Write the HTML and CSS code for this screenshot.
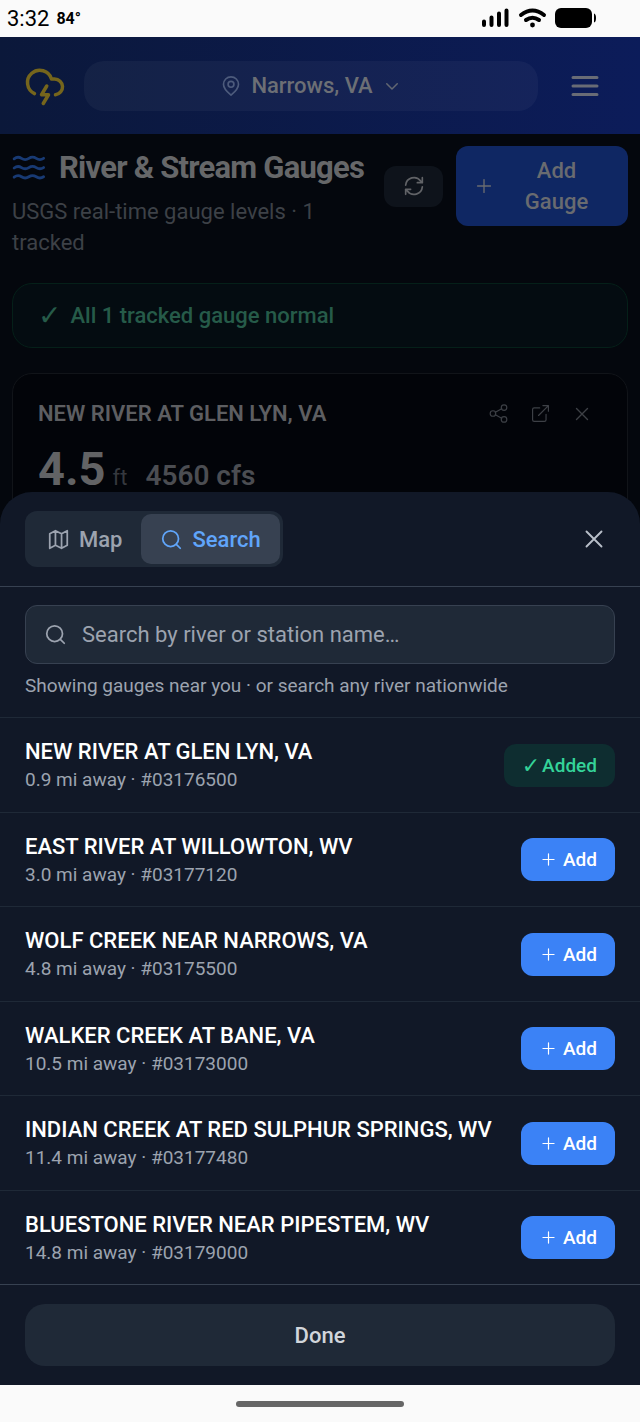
FILE: index.html
```html
<!DOCTYPE html>
<html lang="en">
<head>
  <meta charset="UTF-8" />
  <meta name="viewport" content="width=device-width, initial-scale=1.0"/>
  <title>River &amp; Stream Gauges</title>
  <link rel="stylesheet" href="styles.css">
</head>
<body>

  <!-- icons used more than once -->
  <svg class="sprite" aria-hidden="true">
    <symbol id="plus" viewBox="0 0 24 24"><path d="M5 12h14M12 5v14"/></symbol>
    <symbol id="search" viewBox="0 0 24 24"><circle cx="11" cy="11" r="9"/><path d="m22 22-4.500-4.500"/></symbol>
    <symbol id="close" viewBox="0 0 24 24"><path d="M18 6 6 18M6 6l12 12"/></symbol>
  </svg>

  <div class="status-bar">
    <span class="time">3:32</span>
    <span class="temp">84°</span>
    <svg class="status-icons" width="114" height="22" viewBox="0 0 114 22">
      <path class="bars" d="M3 13.500v3.500M10.500 9.500v7.500M18 5.500v11.500M25.500 2.500v14.500"/>
      <path class="waves" d="M40 7q11.500-9 23 0M45 12q6.500-4.500 13 0"/>
      <circle cx="51.500" cy="17" r="2.400"/>
      <rect x="74" y="0" width="37" height="20" rx="6"/>
      <path d="M113 5.500q2 .5 2 4.500t-2 4.500z"/>
    </svg>
  </div>

  <div class="screen">
    <header class="app-header">
      <svg class="logo" width="42" height="42" viewBox="0 0 24 24"><path d="M6 16.326A7 7 0 1 1 15.710 8h1.790a4.500 4.500 0 0 1 .5 8.973"/><path d="m13 12-3 5h4l-3 5"/></svg>
      <button class="location" type="button">
        <svg class="pin" width="20" height="20" viewBox="0 0 24 24"><path d="M21 10c0 6-6 10.500-9 13-3-2.500-9-7-9-13a9 9 0 0 1 18 0z"/><circle cx="12" cy="10" r="3.500"/></svg>
        <span>Narrows, VA</span>
        <svg class="chevron" width="18" height="18" viewBox="0 0 24 24"><path d="m5 9 7 7 7-7"/></svg>
      </button>
      <button class="menu" type="button" aria-label="Menu">
        <svg width="30" height="30" viewBox="0 0 30 30"><path d="M3 6.500h24M3 15h24M3 23.500h24"/></svg>
      </button>
    </header>

    <main class="page">
      <div class="page-head">
        <div class="page-title">
          <h1>
            <svg width="34" height="34" viewBox="0 0 24 24"><path d="M1.500 5.500q2.600-2 5.200-.3t5.200 0 5.200 0 5.200 0M1.500 12q2.600-2 5.200-.3t5.200 0 5.200 0 5.200 0M1.500 18.500q2.600-2 5.200-.3t5.200 0 5.200 0 5.200 0"/></svg>
            River &amp; Stream Gauges
          </h1>
          <p>USGS real-time gauge levels · 1 tracked</p>
        </div>
        <div class="page-actions">
          <button class="refresh" type="button" aria-label="Refresh">
            <svg width="20" height="20" viewBox="0 0 24 24"><path d="M2 11A10 10 0 0 1 20 6l2 2M22 2v6h-6M22 13A10 10 0 0 1 4 18l-2-2M2 22v-6h6"/></svg>
          </button>
          <button class="add-gauge" type="button">
            <svg width="22" height="22"><use href="#plus"/></svg>
            <span>Add Gauge</span>
          </button>
        </div>
      </div>

      <div class="alert"><span class="tick">✓</span>All 1 tracked gauge normal</div>

      <section class="gauge-card">
        <div class="card-head">
          <h2>NEW RIVER AT GLEN LYN, VA</h2>
          <div class="card-actions">
            <button type="button" aria-label="Share">
              <svg width="19" height="19" viewBox="0 0 24 24"><circle cx="19" cy="4.500" r="3.500"/><circle cx="5" cy="12" r="3.500"/><circle cx="19" cy="19.500" r="3.500"/><path d="m8 10.400 8-4.300M8 13.600l8 4.300"/></svg>
            </button>
            <button type="button" aria-label="Open">
              <svg width="19" height="19" viewBox="0 0 24 24"><path d="M19 13v7a2 2 0 0 1-2 2H4a2 2 0 0 1-2-2V7a2 2 0 0 1 2-2h7M15 2h7v7M9.500 14.500 22 2"/></svg>
            </button>
            <button type="button" aria-label="Remove">
              <svg width="22" height="22"><use href="#close"/></svg>
            </button>
          </div>
        </div>
        <div class="reading">
          <span class="level">4.5</span>
          <span class="unit">ft</span>
          <span class="flow">4560 cfs</span>
        </div>
      </section>
    </main>

    <div class="sheet" role="dialog" aria-label="Add gauge">
      <div class="sheet-head">
        <div class="tabs">
          <button class="tab" type="button">
            <svg width="21" height="21" viewBox="0 0 24 24"><path d="M2 5.500 8.500 2l7 3.500L22 2v16.500L15.500 22l-7-3.500L2 22zM8.500 2v16.500M15.500 5.500V22"/></svg>
            Map
          </button>
          <button class="tab active" type="button">
            <svg width="21" height="21"><use href="#search"/></svg>
            Search
          </button>
        </div>
        <button class="close" type="button" aria-label="Close">
          <svg width="30" height="30"><use href="#close"/></svg>
        </button>
      </div>

      <div class="search-area">
        <div class="search-box">
          <svg width="21" height="21"><use href="#search"/></svg>
          <input type="text" id="gaugeSearch" aria-label="Search gauges" placeholder="Search by river or station name…" />
        </div>
        <label class="hint" for="gaugeSearch">Showing gauges near you · or search any river nationwide</label>
      </div>

      <ul class="results">
        <li>
          <div class="station"><h3>NEW RIVER AT GLEN LYN, VA</h3><p>0.9 mi away · #03176500</p></div>
          <button class="added" type="button" disabled><span class="tick">✓</span>Added</button>
        </li>
        <li>
          <div class="station"><h3>EAST RIVER AT WILLOWTON, WV</h3><p>3.0 mi away · #03177120</p></div>
          <button class="add" type="button"><svg width="19" height="19"><use href="#plus"/></svg>Add</button>
        </li>
        <li>
          <div class="station"><h3>WOLF CREEK NEAR NARROWS, VA</h3><p>4.8 mi away · #03175500</p></div>
          <button class="add" type="button"><svg width="19" height="19"><use href="#plus"/></svg>Add</button>
        </li>
        <li>
          <div class="station"><h3>WALKER CREEK AT BANE, VA</h3><p>10.5 mi away · #03173000</p></div>
          <button class="add" type="button"><svg width="19" height="19"><use href="#plus"/></svg>Add</button>
        </li>
        <li>
          <div class="station"><h3>INDIAN CREEK AT RED SULPHUR SPRINGS, WV</h3><p>11.4 mi away · #03177480</p></div>
          <button class="add" type="button"><svg width="19" height="19"><use href="#plus"/></svg>Add</button>
        </li>
        <li>
          <div class="station"><h3>BLUESTONE RIVER NEAR PIPESTEM, WV</h3><p>14.8 mi away · #03179000</p></div>
          <button class="add" type="button"><svg width="19" height="19"><use href="#plus"/></svg>Add</button>
        </li>
      </ul>

      <div class="sheet-foot">
        <button class="done" type="button">Done</button>
      </div>
    </div>
  </div>

  <div class="nav-bar"><div class="handle"></div></div>

</body>
</html>
```
FILE: styles.css
```css
* {
  box-sizing: border-box;
  margin: 0;
  padding: 0;
}
body {
  min-height: 100vh;
  display: flex;
  flex-direction: column;
  background: #fafafa;
  font-family: Roboto, sans-serif;
  font-size: 22px;
  line-height: 31px;
}
button {
  display: flex;
  align-items: center;
  justify-content: center;
  border: none;
  background: none;
  color: inherit;
  font: inherit;
  font-weight: 500;
  cursor: pointer;
}
svg {
  flex: none;
  fill: none;
  stroke: currentColor;
  stroke-width: 2;
  stroke-linecap: round;
  stroke-linejoin: round;
}
.sprite {
  position: absolute;
  width: 0;
  height: 0;
}
.tick {
  font-family: "DejaVu Sans", sans-serif;
  font-style: italic;
}

/* phone status bar */
.status-bar {
  display: flex;
  align-items: center;
  gap: 7px;
  height: 37px;
  padding: 0 45px 0 7px;
  color: #000;
}
.time {
  font-size: 22px;
}
.temp {
  font-size: 16px;
  font-weight: 700;
}
.status-icons {
  margin-left: auto;
  fill: #000;
  stroke: none;
  overflow: visible;
}
.bars, .waves {
  fill: none;
  stroke: #000;
  stroke-width: 4;
}

.screen {
  position: relative;
  flex: 1;
  overflow: hidden;
  background: #04070d;
}

/* header */
.app-header {
  display: flex;
  align-items: center;
  height: 97px;
  padding: 0 26px 0 24px;
  gap: 18px;
  background: linear-gradient(to right, #0b183a, #0c1c5a);
}
.logo {
  color: #75651c;
}
.location {
  flex: 1;
  height: 50px;
  gap: 10px;
  border-radius: 20px;
  background: rgba(255, 255, 255, 0.04);
  color: #6c6f75;
}
.pin {
  color: #4d5b7c;
}
.chevron {
  color: #626772;
}
.menu {
  width: 58px;
  height: 50px;
  color: #696c76;
}
.menu svg {
  stroke-width: 3;
}

/* page under the sheet */
.page {
  padding: 12px;
}
.page-head {
  display: flex;
  align-items: flex-start;
  gap: 13px;
  margin-bottom: 25px;
}
.page-title {
  flex: 1;
}
.page-title h1 {
  display: flex;
  align-items: center;
  gap: 13px;
  margin-bottom: 6px;
  font-size: 31px;
  line-height: 44px;
  letter-spacing: -0.025em;
  white-space: nowrap;
  color: #666769;
}
.page-title h1 svg {
  color: #183a74;
}
.page-title p {
  color: #3d4147;
}
.page-actions {
  display: flex;
  align-items: center;
  gap: 13px;
}
.refresh {
  width: 59px;
  height: 41px;
  border-radius: 12px;
  background: #0e131b;
  color: #616367;
}
.add-gauge {
  width: 172px;
  padding: 9px 17px;
  border-radius: 12px;
  background: #0f2763;
  color: #696b70;
}
.add-gauge svg, .add svg {
  stroke-width: 1.5;
}
.add-gauge span {
  flex: 1;
  padding-left: 20px;
  padding-right: 13px;
}
.alert {
  display: flex;
  align-items: center;
  gap: 9px;
  height: 65px;
  margin-bottom: 25px;
  padding: 0 25px;
  border: 1px solid #052019;
  border-radius: 20px;
  background: #040c11;
  color: #265b49;
  font-weight: 500;
}
.alert .tick {
  font-size: 28px;
}
.gauge-card {
  height: 400px;
  padding: 24px 25px;
  border: 1px solid #111419;
  border-radius: 20px;
  background: #020409;
}
.card-head {
  display: flex;
  align-items: center;
  justify-content: space-between;
}
.card-head h2 {
  font-size: 22px;
  font-weight: 600;
  color: #5d5e61;
}
.card-actions {
  display: flex;
  gap: 2px;
  color: #3d4046;
}
.card-actions button {
  width: 40px;
  height: 31px;
}
.card-actions svg {
  stroke-width: 1.5;
}
.reading {
  display: flex;
  align-items: baseline;
  padding-top: 12px;
  line-height: 56px;
}
.level {
  font-size: 47px;
  font-weight: 700;
  color: #626365;
}
.unit {
  padding: 0 18px 0 7px;
  color: #35383e;
}
.flow {
  font-size: 28px;
  font-weight: 600;
  color: #4b4d52;
}

/* bottom sheet */
.sheet {
  position: absolute;
  top: 455px;
  right: 0;
  bottom: 0;
  left: 0;
  display: flex;
  flex-direction: column;
  border-radius: 32px 32px 0 0;
  background: #111827;
}
.sheet-head {
  display: flex;
  align-items: center;
  justify-content: space-between;
  padding: 19px 25px;
  border-bottom: 1px solid #374151;
}
.tabs {
  display: flex;
  padding: 3px;
  border-radius: 12px;
  background: #1f2937;
}
.tab {
  gap: 10px;
  height: 50px;
  padding: 0 19px 0 20px;
  border-radius: 10px;
  color: #9ca3af;
}
.tab.active {
  background: #374151;
  color: #60a5fa;
}
.close {
  width: 42px;
  height: 42px;
  color: #b9bfc9;
}
.close svg {
  stroke-width: 1.5;
}
.search-area {
  padding: 18px 25px;
  border-bottom: 1px solid #1f2937;
}
.search-box {
  display: flex;
  align-items: center;
  gap: 16px;
  height: 59px;
  margin-bottom: 9px;
  padding: 0 19px;
  border: 1px solid #374151;
  border-radius: 12px;
  background: #1f2937;
  color: #9ca3af;
}
.search-box input {
  flex: 1;
  min-width: 0;
  border: none;
  outline: none;
  background: none;
  color: #fff;
  font: inherit;
}
.search-box input::placeholder {
  color: #9ca3af;
}
.hint, .station p {
  display: block;
  font-size: 19px;
  line-height: 26px;
  color: #9ca3af;
}
.results {
  flex: 1;
  display: flex;
  flex-direction: column;
  overflow-y: auto;
  list-style: none;
}
.results li {
  flex: 1;
  display: flex;
  align-items: center;
  justify-content: space-between;
  padding: 1px 25px 0;
  border-bottom: 1px solid #1f2937;
}
.results li:last-child {
  border-bottom: none;
}
.station h3 {
  font-size: 22px;
  font-weight: 500;
  line-height: 30px;
  color: #fff;
}
.add, .added {
  height: 43px;
  padding: 0 18px;
  gap: 5px;
  border-radius: 12px;
  font-size: 19px;
}
.add {
  background: #3b82f6;
  color: #fff;
}
.added {
  gap: 2px;
  background: #0e2d30;
  color: #34d399;
  cursor: default;
}
.added .tick {
  font-size: 22px;
  font-weight: 400;
}
.sheet-foot {
  padding: 19px 25px;
  border-top: 1px solid #374151;
}
.done {
  width: 100%;
  height: 62px;
  border-radius: 20px;
  background: #1f2937;
  color: #d1d5db;
}

/* phone navigation bar */
.nav-bar {
  display: flex;
  align-items: center;
  justify-content: center;
  height: 37px;
}
.handle {
  width: 168px;
  height: 6px;
  border-radius: 3px;
  background: #666;
}
```
